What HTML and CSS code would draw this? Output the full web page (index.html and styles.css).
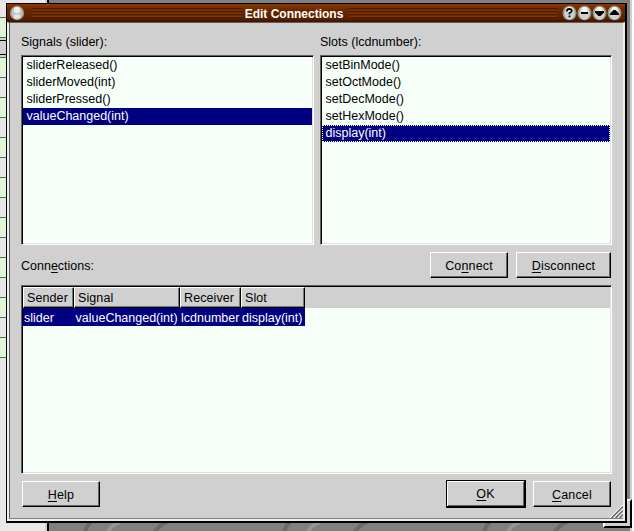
FILE: index.html
```html
<!DOCTYPE html>
<html lang="en"><head><meta charset="utf-8"><title>Edit Connections</title><link rel="stylesheet" href="styles.css"></head>
<body>
<div class="desktop">
<div class="sheet"><div class="cells"></div></div>
<div class="back-edge"></div><div class="back-grip"></div>
<svg class="texture" width="602" height="9" viewBox="0 0 602 9"><g fill="none" stroke-width="4" opacity=".35"><path stroke="#444" d="M85 10q1-6 6-10M155 10q3-6 12-10M284 10q1-6 6-10M355 10q3-6 12-10M484 10q1-6 6-10M555 10q3-6 12-10"/><path stroke="#bbb" d="M108 10q3-7 12-10M308 10q3-7 12-10M508 10q3-7 12-10"/></g></svg>
<main class="window">
<header class="titlebar">
<svg class="orb" width="16" height="16" viewBox="0 0 16 16"><circle cx="8" cy="8" r="7.200" fill="#92968f"/><ellipse cx="8" cy="8" rx="5.500" ry="6.500" fill="#c3c7c0"/><circle cx="8" cy="5" r="3" fill="#eef0ec"/><ellipse cx="8" cy="11.500" rx="3.500" ry="2" fill="#e4e6e1"/></svg>
<i class="grooves"></i><h1>Edit Connections</h1><i class="grooves"></i>
<div class="controls">
<svg width="15" height="16" viewBox="0 0 15 16"><use href="#ball"/><path d="M5 6.500V5.200Q5.300 4 7.300 4Q9.700 4 9.700 5.800Q9.700 7 7.500 8V9.300M7.500 10.500V12.200" fill="none" stroke="#000" stroke-width="1.800"/></svg>
<svg width="15" height="16" viewBox="0 0 15 16"><use href="#ball"/><path d="M4 7h7v2H4z"/></svg>
<svg width="15" height="16" viewBox="0 0 15 16"><use href="#ball"/><path d="M3 6h9v1.500L8.500 11h-2L3 7.500z"/></svg>
<svg width="15" height="16" viewBox="0 0 15 16"><defs><g id="ball"><ellipse cx="7.500" cy="8" rx="7" ry="7.300" fill="#92968f"/><ellipse cx="7.500" cy="8" rx="5.300" ry="6.600" fill="#d0d3cd"/><ellipse cx="7.500" cy="5" rx="3" ry="3" fill="#f4f6f2"/></g></defs><use href="#ball"/><path d="M3 10V8.500L6.500 5h2L12 8.500V10z"/></svg>
</div>
</header>
<section class="body">
<div class="lists">
<div class="pane"><label>Signals (slider):</label>
<ul class="box"><li>sliderReleased()</li><li>sliderMoved(int)</li><li>sliderPressed()</li><li class="selected">valueChanged(int)</li></ul></div>
<div class="pane"><label>Slots (lcdnumber):</label>
<ul class="box"><li>setBinMode()</li><li>setOctMode()</li><li>setDecMode()</li><li>setHexMode()</li><li class="selected focus">display(int)</li></ul></div>
</div>
<div class="actions"><label><span>Conn<u>e</u>ctions:</span></label><button class="connect"><span>Co<u>n</u>nect</span></button><button class="disconnect"><span><u>D</u>isconnect</span></button></div>
<div class="box table">
<div class="row head"><div>Sender</div><div>Signal</div><div>Receiver</div><div>Slot</div></div>
<div class="row data"><div>slider</div><div>valueChanged(int)</div><div>lcdnumber</div><div>display(int)</div></div>
</div>
<footer><button><span><u>H</u>elp</span></button><button class="default"><span><u>O</u>K</span></button><button><span><u>C</u>ancel</span></button></footer>
</section>
<svg class="grip" width="13" height="13" viewBox="0 0 13 13"><path d="M0 13L13 0M4 13L13 4M8 13L13 8" stroke="#fff" stroke-width="1.200"/><path d="M1.500 13L13 1.500M5.500 13L13 5.500M9.500 13L13 9.500" stroke="#666" stroke-width="1.500"/></svg>
</main>
</div>
</body></html>
```
FILE: styles.css
```css
*{box-sizing:border-box}
body{margin:0;overflow:hidden;font:12.5px/17px "Liberation Sans",Arial,sans-serif;color:#000}
h1,ul{margin:0;padding:0;list-style:none}
svg{display:block}
.desktop{position:relative;width:634px;height:531px;padding:3px 0 0 6px;background:#808080}
.sheet{position:absolute;left:0;top:0;width:49px;height:531px;background:#e8e8e8;border-right:2px solid #000;box-shadow:inset -2px 0 #d0d0d0}
.cells{width:6px;height:358px;background:linear-gradient(#e8e8e8 17px,#606060 17px 18px,#e0f5d8 18px 37px,#606060 37px 38px,#d0d0d0 38px 40px,#000 40px 41px,#d0d0d0 41px 54px,#000 54px 55px,#d0d0d0 55px 57px,transparent 57px),repeating-linear-gradient(#606060 0 1px,#e0f5d8 1px 20px,#606060 20px 21px,#e8e8e8 21px 40px) 0 57px}
.back-edge{position:absolute;right:0;top:0;width:4px;height:531px;background:linear-gradient(90deg,#d0d0d0 2px,#fff 2px)}
.back-grip{position:absolute;left:603px;top:499px;width:29px;height:29px;background:#d0d0d0;border:2px solid #fff;border-right-color:#000;border-bottom-color:#000}
.texture{position:absolute;left:0;bottom:0}
.window{position:relative;width:621px;height:520px;background:#d0d0d0;border:1px solid #000;border-right-width:2px;border-bottom-width:2px}
.titlebar{display:flex;align-items:center;height:18px;padding:0 3px 0 2px;background:linear-gradient(#8b3900,#6b2900 30%,#5b2000 80%,#3b1400);color:#fff}
.orb{flex:none;margin-right:7px}
.grooves{flex:1;height:10px;background:repeating-linear-gradient(#4b1c00 0 1px,#6b2900 1px 2px,#843500 2px 3px)}
h1{width:107px;text-align:center;white-space:nowrap;font-size:12px;line-height:18px;font-weight:bold;padding:2px 2px 0 0}
.controls{display:flex;margin-left:4px;width:60px}
.controls svg{flex:none}
.body{height:499px;padding:12px 11px 0 12px;border:2px solid #eee;border-top:1px solid #606060;box-shadow:inset 1px 0 #606060,inset 0 -1px #808080}
.lists{display:grid;grid-template-columns:293px 292px;gap:6px}
label{display:block;height:20px;line-height:15px;white-space:nowrap}
.box{height:190px;background:#f7fff9;border:1px solid;border-color:#606060 #fff #fff #606060;box-shadow:inset 1px 1px #000,inset -1px -1px #e0e0e0;padding:1px}
.table{height:189px}
li{height:17px;padding-left:3.5px;line-height:17px;white-space:nowrap}
.selected{background:#000080;color:#fff}
.focus{outline:1px dotted #fff;outline-offset:-1px}
.actions{display:flex;height:40px;padding:7px 1px 0 0}
.actions label{flex:1;padding-top:7px}
button{width:78px;height:26px;padding:2px 0 0 0;border:1px solid;border-color:#fff #000 #000 #fff;border-radius:0;background:#d0d0d0;box-shadow:inset -1px -1px #666;color:#000;font:inherit;letter-spacing:.15px;display:flex;align-items:center;justify-content:center}
.disconnect{width:95px;margin-left:8px}
u{text-decoration:underline;text-underline-offset:2px;text-decoration-thickness:1px}
.row{display:grid;grid-template-columns:51px 106px 61px 64px;white-space:nowrap}
.head{height:21px;background:#d0d0d0;letter-spacing:.1px}
.head div{border:1px solid;border-color:#fff #000 #000 #fff;box-shadow:inset -1px -1px #777;padding:2px 0 0 3px;height:21px}
.data{width:282px;height:18px;background:#000080;color:#fff}
.data div{padding-left:1px;line-height:20px;height:18px}
.data div:nth-child(2){padding-left:1.5px}
footer{display:flex;align-items:center;padding:6px 1px 0 1px}
footer .default{width:80px;height:28px;margin-left:auto;margin-right:7px;border:1px solid #000;border-right-width:2px;border-bottom-width:2px;box-shadow:inset 1px 1px #fff,inset -1px -1px #666}
.grip{position:absolute;right:2px;bottom:3px}
```
